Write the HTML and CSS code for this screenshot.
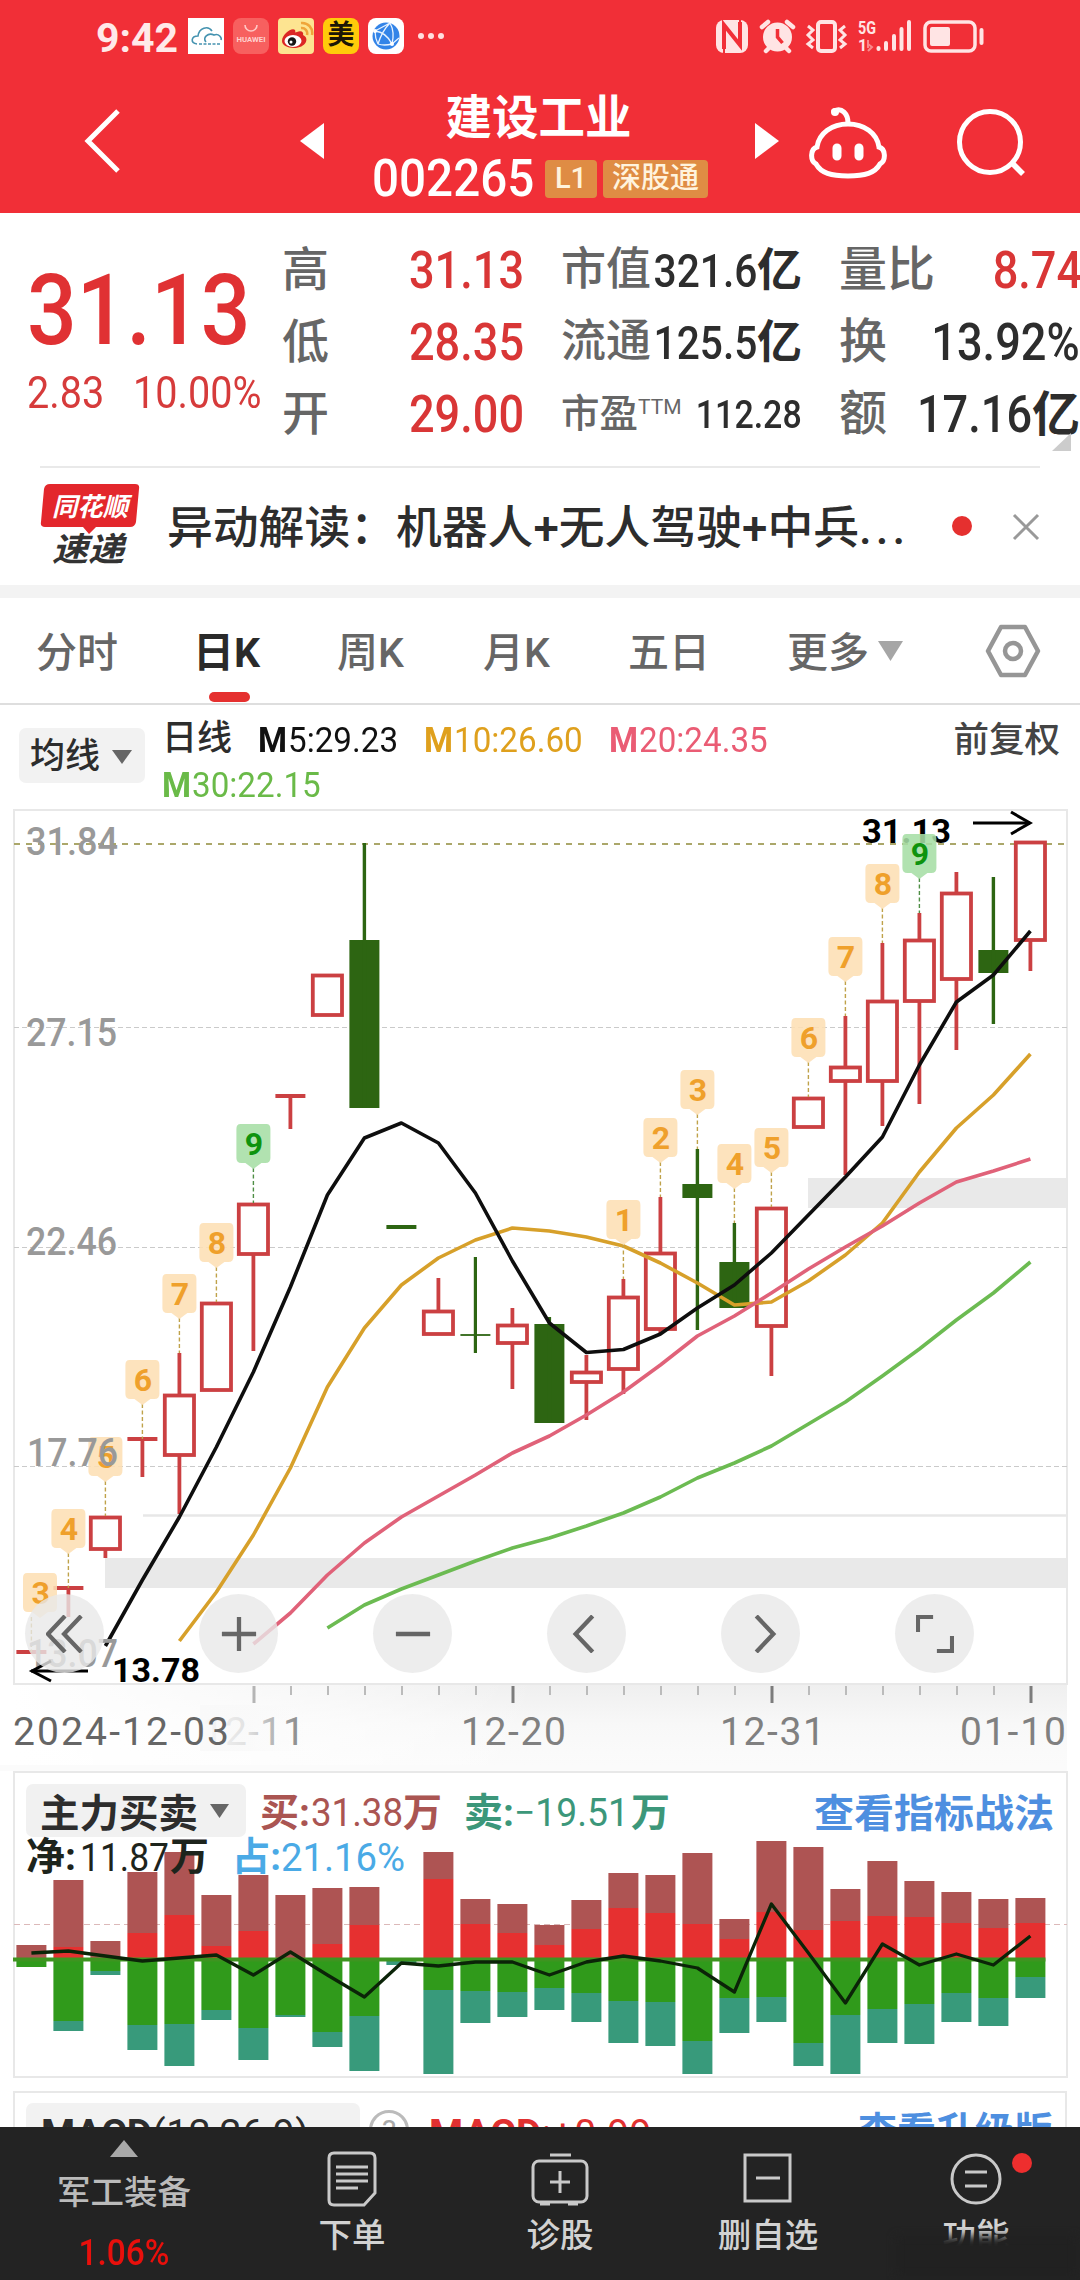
FILE: index.html
```
<!DOCTYPE html>
<html lang="zh-CN">
<head>
<meta charset="utf-8">
<title>建设工业 002265</title>
<link rel="stylesheet" href="styles.css">
</head>
<body>
<div class="app">
  <header class="top">
    <div class="status">
      <span class="clock">9:42</span>
      <div class="notices">
        <svg width="36" height="36" viewBox="0 0 36 36"><rect width="36" height="36" fill="#fff"/><path d="M9 26C2 25 3 18 10 18C11 10 20 7 24 13M18 24C14 20 20 14 26 17C31 15 34 20 33 22" fill="none" stroke="#4593b0" stroke-width="1.6"/><path d="M11 26h22" stroke="#4593b0" stroke-width="1.5" stroke-dasharray="3 1.5"/></svg>
        <svg width="36" height="36" viewBox="0 0 36 36"><rect width="36" height="36" rx="8" fill="#f7605f"/><path d="M12 7a6 6 0 0 0 12 0" fill="none" stroke="#ffc9c6" stroke-width="1.6"/><text x="18" y="24" text-anchor="middle" class="hw" textLength="29" lengthAdjust="spacingAndGlyphs">HUAWEI</text></svg>
        <svg width="36" height="36" viewBox="0 0 36 36"><rect width="36" height="36" rx="4" fill="#fde491"/><path d="M4 23C4 16 14 9 17 12C18 14 16 15 19 14C24 12 26 15 25 17C32 20 28 30 16 30C9 30 4 27 4 23Z" fill="#dc2724"/><ellipse cx="15" cy="23" rx="8.5" ry="6" fill="#fff"/><circle cx="14" cy="23.500" r="4.200" fill="#161616"/><circle cx="13" cy="24" r="1.500" fill="#fff"/><path d="M23 10a5.500 5.500 0 0 1 6 7M23 5a10 10 0 0 1 11 12" fill="none" stroke="#efa53a" stroke-width="2.500"/></svg>
        <span class="mei">美</span>
        <svg width="36" height="36" viewBox="0 0 36 36"><rect width="36" height="36" rx="8" fill="#fff"/><circle cx="18" cy="18" r="13.500" fill="#3384e8"/><path d="M7 13L22 5M7 13Q18 14 24 26M22 5Q27 14 24 26M24 26Q16 28 10 26M7 13Q7 20 10 26M24 26L31 20M10 26Q14 13 22 5" fill="none" stroke="#e8f3ff" stroke-width="1.300"/><circle cx="24" cy="26" r="2" fill="#fff"/><circle cx="7" cy="13" r="2" fill="#fff"/></svg>
      </div>
      <span class="dots"><i></i><i></i><i></i></span>
      <svg class="sys" width="270" height="40" viewBox="715 16 270 40">
        <rect x="716" y="20" width="32" height="33" rx="8" fill="#ffe4e4"/><path d="M724 49V25L740 45V22" fill="none" stroke="#f12f37" stroke-width="4"/><path d="M724 25V53M740 20V46" stroke="#f12f37" stroke-width="2"/>
        <circle cx="777.500" cy="37" r="14.500" fill="#ffe4e4"/><path d="M762 27l6-5M793 27l-6-5M766 51l4-4M789 51l-4-4" stroke="#ffe4e4" stroke-width="4.500" stroke-linecap="round"/><path d="M777.500 29v8l5 6" fill="none" stroke="#f12f37" stroke-width="3.500"/>
        <rect x="818" y="22" width="17" height="29" rx="3" fill="none" stroke="#ffe4e4" stroke-width="4"/><path d="M808 26l5 4l-5 5l5 5l-5 4l5 4M845 26l-5 4l5 5l-5 5l5 4l-5 4" fill="none" stroke="#ffe4e4" stroke-width="3"/>
        <text x="858" y="34" class="g5" textLength="18" lengthAdjust="spacingAndGlyphs">5G</text><text x="858" y="51" class="g5 sm">1</text><path d="M868 40v8M868 44l4 3l-4 4" stroke="#f98a8c" stroke-width="2" fill="none"/>
        <path d="M878.500 48v1M886 43v6M894 36v13M901.500 29v20M909 22v27" stroke="#ffe4e4" stroke-width="4" stroke-linecap="round"/>
        <rect x="925" y="22" width="50" height="29" rx="6" fill="none" stroke="#ffe4e4" stroke-width="3.500"/><rect x="930" y="27" width="20" height="19" rx="2" fill="#ffe4e4"/><path d="M981.500 30v13" stroke="#ffe4e4" stroke-width="4" stroke-linecap="round"/>
      </svg>
    </div>
    <div class="nav">
      <svg width="40" height="66" viewBox="0 0 40 66"><path d="M34 3L4 33L34 63" fill="none" stroke="#fff" stroke-width="5"/></svg>
      <svg width="24" height="36" viewBox="0 0 24 36"><path d="M24 0V36L0 18Z" fill="#fff"/></svg>
      <div class="name">
        <h1>建设工业</h1>
        <div class="code"><span class="codeno">002265</span><span class="tag l1">L1</span><span class="tag sgt">深股通</span></div>
      </div>
      <svg width="24" height="36" viewBox="0 0 24 36"><path d="M0 0V36L24 18Z" fill="#fff"/></svg>
      <svg class="bot" width="80" height="74" viewBox="0 0 80 74"><path d="M25 5C33 1 39 8 39 17" fill="none" stroke="#fff" stroke-width="5" stroke-linecap="round"/><circle cx="26" cy="6" r="4" fill="#fff"/><path d="M39 18C55 18 68 27 70 41C77 43 77 55 71 58C66 67 56 70 39 70C22 70 12 67 7 58C1 55 1 43 8 41C10 27 23 18 39 18Z" fill="none" stroke="#fff" stroke-width="5"/><path d="M28 42v8M50 42v8" stroke="#fff" stroke-width="9" stroke-linecap="round"/></svg>
      <svg class="search" width="70" height="70" viewBox="0 0 70 70"><circle cx="33" cy="34" r="30.500" fill="none" stroke="#fff" stroke-width="5"/><path d="M54 54L66 66" stroke="#fff" stroke-width="5.500"/></svg>
    </div>
  </header>

  <section class="quote">
    <div class="price">
      <div class="last"><b>31.13</b></div>
      <div class="chg"><span>2.83</span><span>10.00%</span></div>
    </div>
    <dl class="col c2">
      <div><dt>高</dt><dd class="up num">31.13</dd></div>
      <div><dt>低</dt><dd class="up num">28.35</dd></div>
      <div><dt>开</dt><dd class="up num">29.00</dd></div>
    </dl>
    <dl class="col c3">
      <div><dt>市值</dt><dd><span class="num">321.6</span><b>亿</b></dd></div>
      <div><dt>流通</dt><dd><span class="num">125.5</span><b>亿</b></dd></div>
      <div class="small"><dt>市盈<sup>TTM</sup></dt><dd class="num">112.28</dd></div>
    </dl>
    <dl class="col c4">
      <div><dt>量比</dt><dd class="up num">8.74</dd></div>
      <div><dt>换</dt><dd class="num">13.92%</dd></div>
      <div><dt>额</dt><dd><span class="num">17.16</span><b>亿</b></dd></div>
    </dl>
    <i class="corner"></i>
  </section>

  <section class="news">
    <svg width="100" height="86" viewBox="0 0 100 86"><path d="M10 2H95Q100 2 99 7L96 40Q95 45 90 45H56L49 52L43 45H5Q0 45 1 40L4 7Q5 2 10 2Z" fill="#e3272c"/><text x="50" y="34" class="lg1" text-anchor="middle" textLength="76" lengthAdjust="spacingAndGlyphs">同花顺</text><text x="48" y="79" class="lg2" text-anchor="middle" textLength="72" lengthAdjust="spacingAndGlyphs">速递</text></svg>
    <p>异动解读：机器人+无人驾驶+中兵<span>...</span></p>
    <i class="reddot"></i>
    <svg width="28" height="28" viewBox="0 0 28 28"><path d="M2 2L26 26M26 2L2 26" stroke="#999" stroke-width="3"/></svg>
  </section>
  <div class="band"></div>

  <nav class="tabs">
    <span>分时</span><span class="on">日K</span><span>周K</span><span>月K</span><span>五日</span>
    <span>更多<svg width="25" height="20" viewBox="0 0 25 20"><path d="M0 0H25L12.500 20Z" fill="#a6a6a6"/></svg></span>
    <svg width="56" height="54" viewBox="0 0 56 54"><path d="M16 3H40L53 27L40 51H16L3 27Z" fill="none" stroke="#969696" stroke-width="4.500" stroke-linejoin="round"/><circle cx="28" cy="27" r="8" fill="none" stroke="#969696" stroke-width="4.500"/></svg>
  </nav>

  <section class="ma">
    <span class="pick">均线<svg width="20" height="14" viewBox="0 0 20 14"><path d="M0 0H20L10 14Z" fill="#666"/></svg></span>
    <div class="vals">
      <b>日线</b>
      <span class="m5"><b>M</b>5:29.23</span><span class="m10"><b>M</b>10:26.60</span><span class="m20"><b>M</b>20:24.35</span><span class="m30"><b>M</b>30:22.15</span>
    </div>
    <span class="adj">前复权</span>
  </section>

  <section class="kline">
    <svg id="kline" width="1080" height="962" viewBox="0 803 1080 962"></svg>
    <div class="tools">
      <button><svg viewBox="0 0 40 40"><path d="M20 1L2 20L20 39M37 1L19 20L37 39"/></svg></button>
      <button><svg viewBox="0 0 40 40"><path d="M20 2V38M2 20H38"/></svg></button>
      <button><svg viewBox="0 0 40 40"><path d="M2 20H38"/></svg></button>
      <button><svg viewBox="0 0 40 40"><path d="M26 1L8 20L26 39"/></svg></button>
      <button><svg viewBox="0 0 40 40"><path d="M15 1L33 20L15 39"/></svg></button>
      <button><svg viewBox="0 0 40 40"><path d="M2 18V2H18M22 38H38V22"/></svg></button>
    </div>
  </section>

  <section class="flow"><svg id="flow" width="1080" height="320" viewBox="0 1765 1080 320"></svg></section>

  <section class="macd">
    <div class="panel">
      <span class="btn"><b>MACD</b>(12,26,9)<svg width="20" height="14" viewBox="0 0 20 14"><path d="M0 0H20L10 14Z" fill="#666"/></svg></span>
      <i class="help">?</i>
      <span class="mv"><b>MACD</b>:+0.99</span>
      <b class="link">查看升级版</b>
    </div>
  </section>

  <footer class="bar">
    <div class="sector"><svg width="28" height="17" viewBox="0 0 28 17"><path d="M14 0L28 17H0Z" fill="#a9a9a9"/></svg><span>军工装备</span><em>1.06%</em></div>
    <div><svg width="52" height="56" viewBox="0 0 52 56"><path d="M8 2H44Q49 2 49 7V42L38 54H8Q3 54 3 49V7Q3 2 8 2Z"/><path d="M10 16H42M10 23H42M10 30H42M10 37H32"/></svg><span>下单</span></div>
    <div><svg width="60" height="56" viewBox="0 0 60 56"><rect x="3" y="10" width="54" height="41" rx="6"/><path d="M20 4H41M30 20V42M20 31H40M10 53H20M38 53H48"/></svg><span>诊股</span></div>
    <div><svg width="52" height="56" viewBox="0 0 52 56"><rect x="3" y="4" width="45" height="46"/><path d="M14 27H38"/></svg><span>删自选</span></div>
    <div class="last-item"><svg width="56" height="56" viewBox="0 0 56 56"><circle cx="28" cy="28" r="24"/><path d="M17 21H39M17 35H39"/></svg><i></i><span>功能</span></div>
  </footer>
</div>
<script src="script.js"></script>
</body>
</html>
```
FILE: styles.css
```
* { box-sizing: border-box; margin: 0; padding: 0; }
body { width: 1080px; height: 2280px; overflow: hidden; background: #fff; font-family: Roboto, "Noto Sans CJK SC", sans-serif; color: #2d2d2d; }
svg { display: block; flex: none; }
i, em { font-style: normal; }
.app { width: 1080px; height: 2280px; display: flex; flex-direction: column; overflow: hidden; }
.app > * { flex: none; }
b { font-weight: 700; }

.top { height: 213px; background: #f12f37; color: #fff; }
.status { height: 72px; display: flex; align-items: center; padding: 0 95px 0 96px; }
.clock { width: 92px; font: 700 41px/72px Roboto, sans-serif; color: #ffe9e9; padding-top: 4px; }
.notices { display: flex; gap: 9px; }
.hw { font: 700 8px Roboto, sans-serif; fill: #ffd0ce; }
.mei { width: 36px; height: 36px; border-radius: 8px; background: #ffcb0a; color: #1c1606; font-size: 27px; font-weight: 700; line-height: 34px; text-align: center; }
.dots { display: flex; gap: 4px; margin-left: 14px; }
.dots i { width: 6px; height: 6px; border-radius: 50%; background: #ffdede; }
.sys { margin-left: auto; }
.g5 { font: 700 19px Roboto, sans-serif; fill: #ffe4e4; }
.g5.sm { font-size: 16px; }
.nav { height: 141px; display: grid; grid-template-columns: 216px 24px 431px 24px 30px 78px 70px 70px; padding-left: 84px; align-items: center; }
.nav > svg { margin-top: -3px; }
.nav > .bot { grid-column: 6; margin-top: 0; }
.nav > .search { grid-column: 8; margin-top: 1px; }
.name { height: 141px; padding-top: 20px; display: flex; flex-direction: column; align-items: center; }
.name h1 { font-size: 46.500px; line-height: 52px; font-weight: 700; position: relative; left: -1px; }
.code { display: flex; align-items: center; margin: 15px 0 0 1px; }
.codeno { font-size: 52px; line-height: 40px; width: 173px; transform: scaleX(.915); transform-origin: left; font-weight: 500; }
.tag { height: 38px; border-radius: 4px; background: #df8c44; color: #fff3dd; font-size: 29px; font-weight: 500; line-height: 37px; text-align: center; }
.l1 { width: 52px; }
.sgt { width: 105px; margin-left: 6px; }

.quote { height: 253px; padding-top: 21px; display: grid; grid-template-columns: 283px 239px 240px 240px; column-gap: 0; position: relative; }
.c3 { margin-left: 39px; margin-right: -40px; }
.c4 { margin-left: 77px; margin-right: -78px; }
.price { color: #e03133; padding: 17px 0 0 27px; }
.last b { display: block; font-size: 99px; font-weight: 500; line-height: 118px; transform: scaleX(.885); transform-origin: left; }
.chg { display: flex; font-size: 44.500px; line-height: 50px; color: #d63b3b; margin-top: -1px; }
.chg span { width: 106px; transform: scaleX(.89); transform-origin: left; white-space: nowrap; }
.col div { height: 72px; display: flex; align-items: center; justify-content: space-between; font-size: 51px; white-space: nowrap; }
.col dt { color: #666; font-size: 47px; font-weight: 500; line-height: 60px; }
.col dd { display: flex; line-height: 60px; padding-top: 1px; }
.col dd.num, .num { display: block; transform: scaleX(.885); transform-origin: right; margin-left: -22px; font-weight: 500; }
.c2 .num { position: relative; left: 2px; }
.c2 dt { position: relative; left: -1px; }
.c3 div { font-size: 46px; }
.c3 dt { font-size: 45px; }
.c3 dd b { font-size: 45px; }
.c3 .small { font-size: 39px; }
.c3 .small dt { font-size: 38.500px; }
.c3 .small .num { transform: scaleX(.87); }
.c3 sup { font-size: 21px; display: inline-block; line-height: 20px; vertical-align: 13px; font-weight: 400; }
.c4 dt, .c4 dd b { font-size: 48px; }
.c4 .up { margin-right: -2px; }
.up { color: #d93636; }
.corner { position: absolute; right: 9px; bottom: 15px; border-left: 19px solid transparent; border-bottom: 18px solid #ccc; }

.news { height: 119px; margin: 0 40px; border-top: 2px solid #e9e9e9; display: flex; align-items: center; }
.news p { font-size: 45.800px; font-weight: 500; line-height: 60px; margin-left: 27px; width: 778px; white-space: nowrap; padding-top: 4px; }
.news p span { letter-spacing: 4px; }
.news > svg:first-child { margin-top: -3px; }
.lg1 { font: italic 700 26px "Noto Sans CJK SC", sans-serif; fill: #fff; }
.lg2 { font: italic 700 33px "Noto Sans CJK SC", sans-serif; fill: #333; }
.reddot { width: 20px; height: 20px; border-radius: 50%; background: #e5302f; margin: -2px 40px 0 10px; }
.band { height: 13px; background: #f3f3f3; }

.tabs { height: 107px; border-bottom: 2px solid #dedede; display: grid; grid-template-columns: 157px 144px 146px 145px 159px 198px 56px; padding-left: 36px; align-items: center; font-size: 41px; font-weight: 500; color: #666; line-height: 105px; }
.tabs span { display: flex; align-items: center; gap: 9px; position: relative; white-space: nowrap; height: 105px; padding-top: 5px; }
.tabs span svg { margin-top: -5px; }
.tabs .on { color: #2a2a2a; font-weight: 700; }
.tabs .on::after { content: ""; position: absolute; left: 16px; bottom: 1px; width: 41px; height: 10px; border-radius: 5px; background: #e5302f; }

.ma { height: 98px; display: flex; padding: 13px 20px 0 19px; font-size: 35.500px; line-height: 44px; }
.pick { width: 126px; height: 55px; margin-top: 10px; background: #f2f2f2; border-radius: 7px; display: flex; align-items: center; gap: 12px; padding: 3px 0 0 11px; font-size: 35px; font-weight: 500; }
.vals { width: 640px; margin-left: 17px; display: flex; flex-wrap: wrap; align-content: flex-start; }
.vals > b { width: 96px; font-weight: 500; font-size: 35px; line-height: 42px; }
.vals span { transform-origin: left; transform: scaleX(.935); white-space: nowrap; height: 45px; }
.vals span b { margin-right: 1px; }
.m5 { color: #111; width: 166px; }
.m10 { color: #dfa01d; width: 185px; }
.m20 { color: #ea5c74; width: 190px; }
.m30 { color: #6aba48; }
.adj { margin-left: auto; line-height: 44px; color: #444; font-weight: 500; }

.kline { height: 962px; position: relative; }
.tools { position: absolute; left: 25px; top: 791px; display: flex; gap: 95px; }
.tools button { width: 79px; height: 79px; border: 0; border-radius: 50%; background: rgba(232,232,232,.8); display: grid; place-items: center; }
.tools svg { width: 38px; height: 38px; fill: none; stroke: #666; stroke-width: 4.500; }
svg text { font-family: Roboto, "Noto Sans CJK SC", sans-serif; }
svg .lg1, svg .lg2 { font-family: "Noto Sans CJK SC", sans-serif; }
.ax { font-size: 39px; fill: #999; font-weight: 500; }
.date { font-size: 39px; fill: #808080; }
.mark { font-size: 34px; font-weight: 700; fill: #000; }
.badge { font-size: 32px; font-weight: 700; text-anchor: middle; }
.t { font-size: 39px; }
.k { font-weight: 700; }

.flow { height: 320px; }
.macd { height: 42px; padding: 6px 13px 0; overflow: hidden; }
.panel { height: 200px; border: 2px solid #e8e8e8; display: flex; align-items: flex-start; padding: 10px 12px 0 11px; font-size: 39px; line-height: 62px; white-space: nowrap; }
.btn { width: 334px; height: 62px; background: #f2f2f2; border-radius: 7px; display: flex; align-items: center; padding-left: 15px; letter-spacing: .6px; }
.btn b { font-weight: 700; letter-spacing: 0; }
.btn svg { margin-left: 14px; }
.help { width: 40px; height: 40px; margin: 7px 0 0 9px; border: 3px solid #bbb; border-radius: 50%; color: #aaa; font-size: 30px; line-height: 36px; text-align: center; }
.mv { margin-left: 20px; color: #e03030; letter-spacing: .4px; }
.link { margin-left: auto; color: #4e8fe0; line-height: 58px; }

.bar { height: 153px; background: #232323; color: #d2d2d2; display: grid; grid-template-columns: 248px 208px 208px 208px 208px; font-size: 33.500px; line-height: 40px; font-weight: 500; }
.bar > div { display: flex; flex-direction: column; align-items: center; padding-top: 24px; position: relative; }
.bar svg { fill: none; stroke: #c9c9c9; stroke-width: 3; }
.bar span { margin-top: 9px; }
.bar .sector { padding-top: 13px; color: #bbb; }
.sector svg { stroke: none; }
.bar .sector span { margin-top: 16px; }
.sector em { color: #e8100c; font-size: 36px; margin-top: 20px; font-weight: 500; transform: scaleX(.93); }
.last-item i { position: absolute; left: 140px; top: 26px; width: 20px; height: 20px; border-radius: 50%; background: #ee2e2e; }
.last-item::after { content: ""; position: absolute; left: 24px; top: 109px; width: 180px; height: 40px; background: #212121; filter: blur(4px); }
```
FILE: script.js
```
const X = i => 31.4 + 37 * i;
const RED = '#cb4042', GREEN = '#2d6512';
const line = (x1, y1, x2, y2, c, w, extra = '') =>
  `<line x1="${x1}" y1="${y1}" x2="${x2}" y2="${y2}" stroke="${c}" stroke-width="${w}" ${extra}/>`;
const rect = (x, y, w, h, c, extra = '') =>
  `<rect x="${x}" y="${y}" width="${w}" height="${h}" fill="${c}" ${extra}/>`;
const text = (s, x, y, len, cls, extra = '') =>
  `<text x="${x}" y="${y}" textLength="${len}" lengthAdjust="spacingAndGlyphs" class="${cls}" ${extra}>${s}</text>`;
const spaced = (s, x, y, len, extra = '') =>
  `<text x="${x}" y="${y}" textLength="${len}" class="date" ${extra}>${s}</text>`;
const poly = (start, ys, c, w) =>
  `<polyline fill="none" stroke="${c}" stroke-width="${w}" stroke-linejoin="round" points="${ys.map((y, k) => X(start + k) + ',' + y).join(' ')}"/>`;

// type, body top, body bottom, wick top, wick bottom
const candles = [
  ['-', 1652, 1652, 1652, 1652], ['-', 1588, 1588, 1588, 1617], ['r', 1516, 1550, 1516, 1558], ['-', 1439, 1439, 1439, 1477],
  ['r', 1394, 1456, 1353, 1514], ['r', 1302, 1391, 1302, 1391], ['r', 1203, 1255, 1203, 1351], ['-', 1096, 1096, 1096, 1129],
  ['r', 974, 1016, 974, 1016], ['g', 940, 1108, 843, 1108], ['d', 1227, 1227, 1227, 1227], ['r', 1310, 1335, 1278, 1335],
  ['x', 1335, 1335, 1257, 1353], ['r', 1324, 1344, 1308, 1389], ['g', 1324, 1423, 1317, 1423], ['r', 1371, 1383, 1355, 1420],
  ['r', 1296, 1370, 1279, 1394], ['r', 1252, 1330, 1197, 1333], ['g', 1184, 1198, 1149, 1330], ['g', 1262, 1308, 1223, 1308],
  ['r', 1207, 1327, 1207, 1376], ['r', 1097, 1128, 1097, 1128], ['r', 1066, 1082, 1016, 1175], ['r', 1000, 1082, 943, 1126],
  ['r', 939, 1002, 913, 1104], ['r', 892, 980, 872, 1050], ['g', 950, 973, 877, 1024], ['r', 841, 941, 841, 971]
];
// candle index, count, x shift
const badges = [[0, 3, 8.6], [1, 4], [2, 5], [3, 6], [4, 7], [5, 8], [6, 9], [16, 1], [17, 2], [18, 3], [19, 4], [20, 5], [21, 6], [22, 7], [23, 8], [24, 9]];

let s = '<defs><linearGradient id="ft" x1="0" x2="0" y1="0" y2="1"><stop offset="0" stop-color="#efefef"/><stop offset=".5" stop-color="#f8f8f8"/><stop offset="1" stop-color="#fbfbfb"/></linearGradient>' +
  '<linearGradient id="fs" x1="0" x2="1" y1="0" y2="0"><stop offset="0" stop-color="#fff"/><stop offset=".3" stop-color="#fff" stop-opacity=".5"/><stop offset=".5" stop-color="#fff" stop-opacity="0"/></linearGradient>' +
  '<linearGradient id="fl" x1="0" x2="1" y1="0" y2="0"><stop offset="0" stop-color="#f9f9f9"/><stop offset=".45" stop-color="#f9f9f9" stop-opacity=".8"/><stop offset="1" stop-color="#f9f9f9" stop-opacity="0"/></linearGradient></defs>';
s += rect(14, 1685, 1053, 80, 'url(#ft)') + rect(14, 1685, 1053, 80, 'url(#fs)');
s += rect(14, 810, 1053, 874, '#fff', 'stroke="#e8e8e8" stroke-width="2"');
[1027, 1247, 1466].forEach(y => s += line(14, y + .5, 1067, y + .5, '#cacaca', 1, 'stroke-dasharray="5 3"'));
s += rect(808, 1178, 258, 30, '#e9e9e9') + line(143, 1515.5, 1066, 1515.5, '#e7e7e7', 2.5) + rect(105, 1558, 961, 30, '#e9e9e9');
s += line(14, 844, 1067, 844, '#aba76a', 2, 'stroke-dasharray="6 6"');
s += text('31.13', 862, 843, 89, 'mark') + line(973, 823, 1030, 823, '#000', 3) + '<path d="M1011 812L1030 823L1011 834" fill="none" stroke="#000" stroke-width="3"/>';
candles.forEach(([t, a, b, h, l], i) => {
  const x = X(i);
  if (t === 'r') {
    s += line(x, h, x, a, RED, 3.8) + line(x, b, x, l, RED, 3.8);
    s += rect(x - 14.6, a + 1.5, 29.2, b - a - 2.5, '#fff', `stroke="${RED}" stroke-width="3.8"`);
  } else if (t === '-') s += line(x - 15, a, x + 15, a, RED, 4) + line(x, a, x, l, RED, 3.8);
  else if (t === 'g') s += rect(x - 15, a, 30, b - a, GREEN) + line(x, h, x, l, GREEN, 3.4);
  else if (t === 'd') s += line(x - 15, a, x + 15, a, GREEN, 4);
  else s += line(x - 15, a, x + 15, a, GREEN, 1.8) + line(x, h, x, l, GREEN, 3.2);
});
s += poly(4, [1641, 1592, 1535, 1468, 1387, 1328, 1285, 1258, 1240, 1228, 1231, 1237, 1246, 1263, 1283, 1305, 1302, 1281, 1255, 1223, 1172, 1128, 1095, 1054], '#d7a02a', 3.6);
s += poly(6, [1644, 1613, 1575, 1543, 1517, 1496, 1475, 1453, 1436, 1415, 1392, 1365, 1336, 1316, 1293, 1269, 1247, 1226, 1203, 1182, 1171, 1159], '#e06279', 3.6);
s += poly(8, [1628, 1605, 1589, 1575, 1561, 1548, 1538, 1526, 1513, 1497, 1478, 1463, 1446, 1424, 1402, 1376, 1349, 1320, 1293, 1262], '#6cbb52', 3.6);
s += poly(2, [1646, 1580, 1517, 1447, 1372, 1287, 1195, 1138, 1123, 1143, 1193, 1261, 1323, 1352.5, 1349.5, 1334, 1308, 1285, 1253, 1215, 1177, 1137, 1065, 1002, 975, 931], '#0e0e0e', 3.6);
badges.forEach(([i, n, dx = 0]) => {
  const c = candles[i], end = Math.min(c[1], c[3]), top = end - 79, x = X(i) + dx, g = n === 9;
  s += line(X(i), top + 44, X(i), end, g ? '#4f8f45' : '#bfa24a', 1.4, 'stroke-dasharray="4 2.500"');
  s += `<path d="M${x - 13} ${top}H${x + 13}Q${x + 17} ${top} ${x + 17} ${top + 5}V${top + 34}Q${x + 17} ${top + 39} ${x + 12} ${top + 39}H${x + 8}L${x} ${top + 45}L${x - 8} ${top + 39}H${x - 12}Q${x - 17} ${top + 39} ${x - 17} ${top + 34}V${top + 5}Q${x - 17} ${top} ${x - 13} ${top}Z" fill="${g ? '#a6dea5' : '#fddfb4'}" fill-opacity=".88"/>`;
  s += `<text x="${x + .6}" y="${top + 30.5}" class="badge" fill="${g ? '#0e930e' : '#efa02b'}">${n}</text>`;
});
s += text('31.84', 26, 855, 92, 'ax') + text('27.15', 26, 1046, 91, 'ax') + text('22.46', 26, 1255, 91, 'ax') + text('17.76', 27, 1466, 91, 'ax') + text('13.07', 27, 1667, 91, 'ax');
s += line(31, 1671, 88, 1671, '#000', 3) + '<path d="M51 1661L32 1671L51 1681" fill="none" stroke="#000" stroke-width="3"/>' + text('13.78', 112, 1682, 88, 'mark');
for (let i = 6; i < 28; i++) {
  const major = (i - 6) % 7 === 0;
  s += line(X(i) + .6, 1686, X(i) + .6, major ? 1703 : 1695, i === 6 ? '#b5b5b5' : major ? '#7c7c7c' : '#bbb', major ? 3 : 2);
}
s += spaced('12-11', 202, 1745, 103) + rect(200, 1705, 106, 46, 'url(#fl)');
s += spaced('2024-12-03', 13, 1745, 216, 'style="fill:#666"') + spaced('12-20', 461, 1745, 105) + spaced('12-31', 720, 1745, 105) + spaced('01-10', 960, 1745, 106);
document.getElementById('kline').innerHTML = s;

// top of big buys, top of active buys, end of active sells, end of all sells
const bars = [
  [1945, 1959, 1967, 1967], [1880, 1947, 2021, 2031], [1941, 1959, 1971, 1975], [1872, 1933, 2025, 2050], [1852, 1915, 2024, 2066],
  [1895, 1946, 2010, 2020], [1875, 1931, 2028, 2060], [1895, 1959, 2015, 2017], [1888, 1944, 2032, 2047], [1887, 1925, 2016, 2071],
  [1959, 1959, 1960, 1965], [1852, 1879, 1990, 2074], [1899, 1924, 1991, 2023], [1904, 1933, 1992, 2017], [1925, 1945, 1988, 2010],
  [1900, 1929, 1993, 2022], [1873, 1908, 2001, 2043], [1875, 1913, 2002, 2046], [1853, 1924, 2041, 2074], [1919, 1939, 1998, 2033],
  [1841, 1912, 1997, 2022], [1847, 1930, 2043, 2066], [1889, 1921, 2015, 2074], [1861, 1916, 2009, 2043], [1881, 1917, 2004, 2044],
  [1892, 1923, 1993, 2022], [1899, 1928, 1998, 2026], [1898, 1923, 1977, 1998]
];
let f = rect(14, 1772, 1053, 305, '#fff', 'stroke="#e8e8e8" stroke-width="2"');
f += rect(0, 1765, 1067, 6, '#fbfbfb');
f += line(14, 1924.5, 1067, 1924.5, '#dcb9b9', 1, 'stroke-dasharray="6 4"');
f += rect(26, 1784, 220, 53, '#f1f1f1', 'rx="7"');
bars.forEach(([a, b, c, d], i) => {
  const x = X(i) - 15;
  f += rect(x, a, 30, b - a, '#ae5453') + rect(x, b, 30, 1959 - b, '#e63030') + rect(x, 1959, 30, c - 1959, '#309a1b') + rect(x, c, 30, d - c, '#389a7b');
});
f += line(13, 1959.5, X(27) + 15, 1959.5, '#3e9420', 4);
f += poly(0, [1953, 1951, 1956, 1961, 1958, 1955, 1975, 1952, 1975, 1997, 1963, 1966, 1962, 1962, 1975, 1962, 1956, 1961, 1968, 1992, 1904, 1953, 2003, 1944, 1965, 1954, 1965, 1936], '#0b2408', 3.3);
f += text('主力买卖', 40, 1827, 158, 't k', 'fill="#2d2d2d"') + '<path d="M210 1804H229L219.500 1818Z" fill="#666"/>';
f += text('买:', 260, 1826, 50, 't k', 'fill="#aa5552"') + text('31.38', 311, 1826, 92, 't', 'fill="#aa5552"') + text('万', 403, 1826, 39, 't k', 'fill="#aa5552"');
f += text('卖:', 464, 1826, 50, 't k', 'fill="#3c977a"') + text('−19.51', 514, 1826, 115, 't', 'fill="#3c977a"') + text('万', 631, 1826, 39, 't k', 'fill="#3c977a"');
f += text('净:', 26, 1870, 50, 't k', 'fill="#1d241c"') + text('11.87', 80, 1871, 89, 't', 'fill="#1d241c"') + text('万', 170, 1870, 39, 't k', 'fill="#1d241c"');
f += text('占:', 232, 1870, 49, 't k', 'fill="#4aaae6"') + text('21.16%', 281, 1871, 124, 't', 'fill="#4aaae6"');
f += text('查看指标战法', 814, 1827, 240, 't k', 'fill="#4e8fe0"');
document.getElementById('flow').innerHTML = f;
```
